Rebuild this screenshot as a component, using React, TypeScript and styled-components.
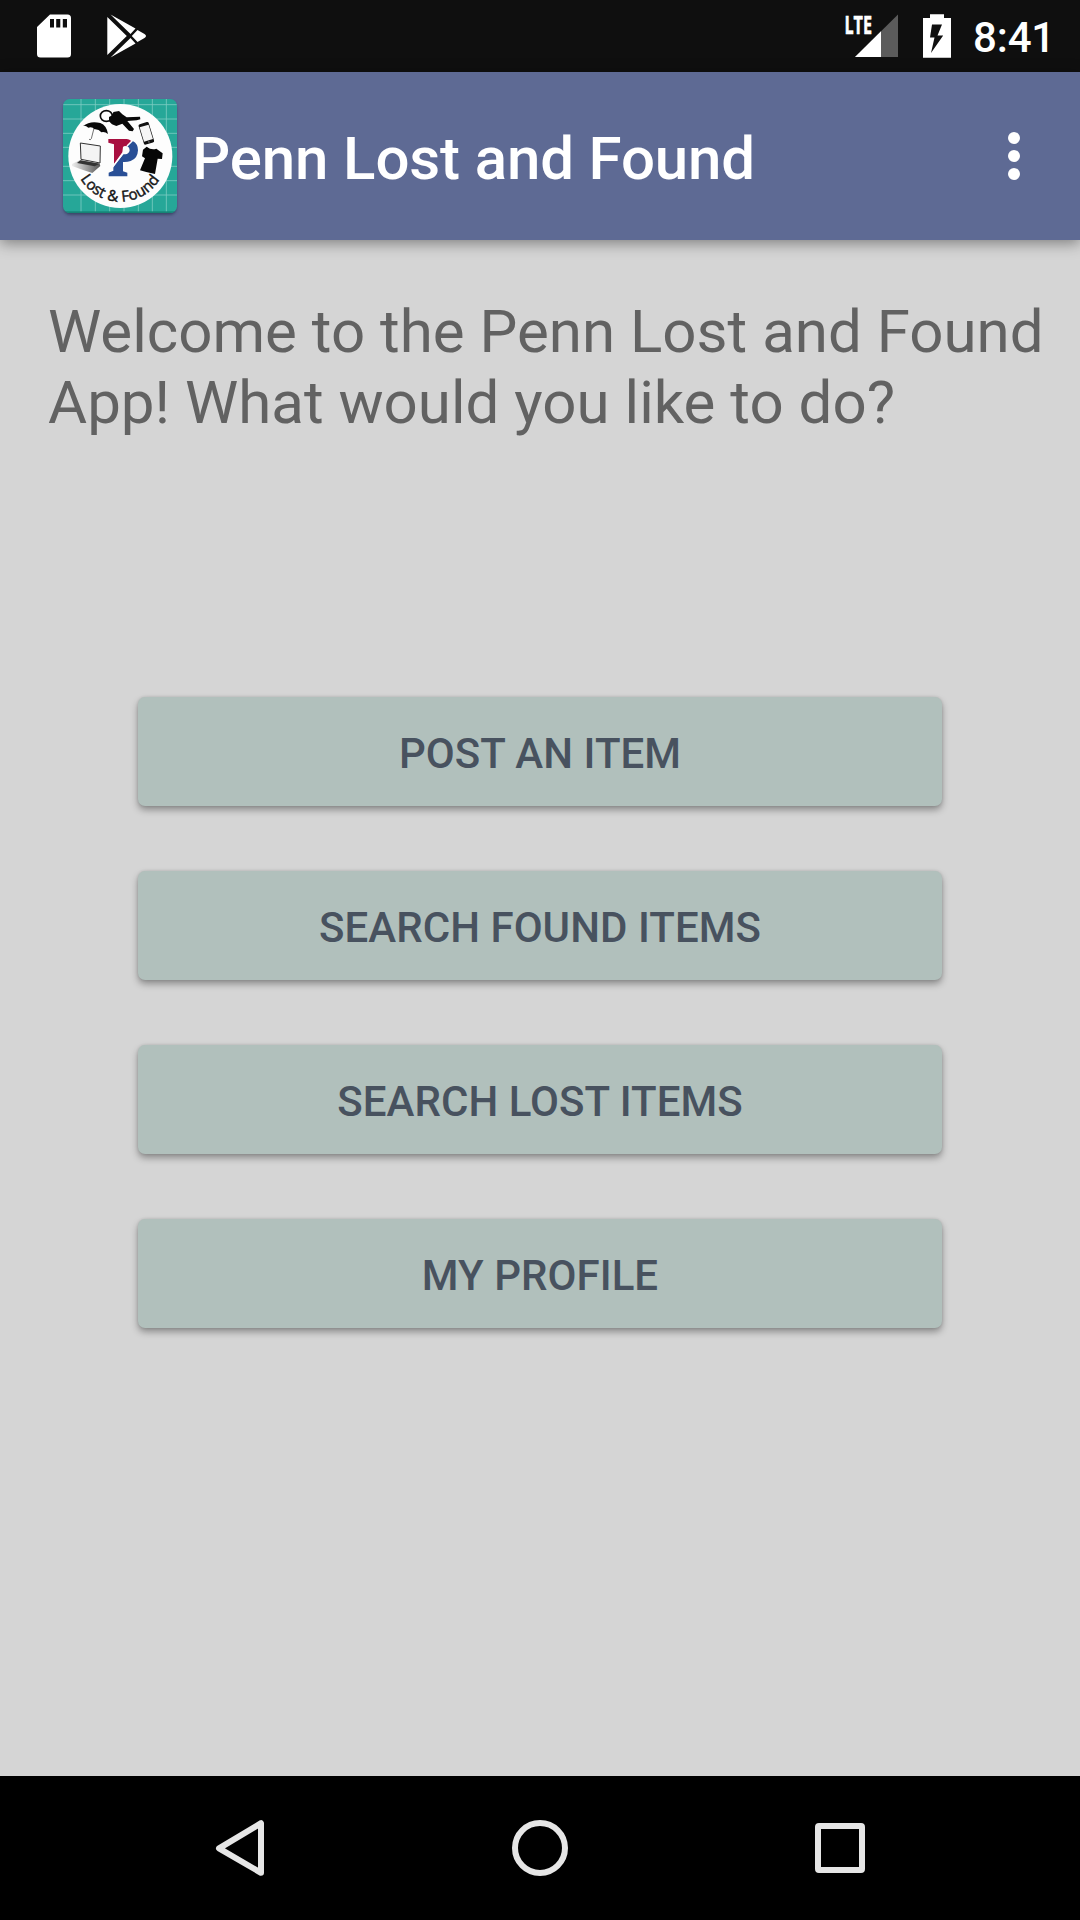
import React from 'react';
import styled, { createGlobalStyle } from 'styled-components';

const GlobalStyle = createGlobalStyle`
  html, body { margin: 0; padding: 0; background: #d5d5d5; }
  * { box-sizing: border-box; }
`;

const Screen = styled.div`
  width: 1080px;
  height: 1920px;
  display: flex;
  flex-direction: column;
  background: #d5d5d5;
  font-family: Roboto, 'Liberation Sans', sans-serif;
  overflow: hidden;
`;

const StatusBar = styled.header`
  flex: none;
  height: 72px;
  padding: 0 25px 0 36px;
  display: flex;
  justify-content: space-between;
  align-items: center;
  background: #0f0f0f;
  color: #fff;
`;

const StatusGroup = styled.div`
  height: 72px;
  display: flex;
  align-items: center;
`;

const StatusIcon = styled.svg<{ $gap: number }>`
  display: block;
  flex: none;
  overflow: visible;
  margin-right: ${(p) => p.$gap}px;
`;

const Clock = styled.time`
  font-size: 42px;
  line-height: 50px;
  font-weight: 500;
  letter-spacing: -0.2px;
  padding-top: 4px;
`;

const AppBar = styled.div`
  flex: none;
  height: 168px;
  padding: 0 60px 0 63px;
  display: flex;
  align-items: center;
  background: #5e6a94;
  box-shadow: 0 3px 14px rgba(0, 0, 0, 0.42);
  z-index: 1;
`;

const Title = styled.h1`
  flex: 1;
  margin: 0;
  padding: 5px 0 0 15px;
  font-size: 60px;
  line-height: 70px;
  font-weight: 500;
  letter-spacing: -0.13px;
  color: #fff;
  white-space: nowrap;
`;

const MenuButton = styled.button`
  border: 0;
  padding: 0;
  background: none;
  display: flex;
  flex-direction: column;
  gap: 6px;
`;

const Dot = styled.span`
  width: 12px;
  height: 12px;
  border-radius: 50%;
  background: #fff;
`;

const Content = styled.main`
  flex: 1;
  padding: 56px 30px 0 48px;
`;

const Welcome = styled.p`
  margin: 0;
  height: 142px;
  font-size: 60px;
  line-height: 71px;
  letter-spacing: 0.02px;
  color: #626262;
  white-space: nowrap;
`;

const Actions = styled.div`
  margin: 259px 108px 0 90px;
  display: flex;
  flex-direction: column;
  gap: 65px;
`;

const Action = styled.button`
  height: 109px;
  border: 0;
  border-radius: 7px;
  padding: 3px 0 0;
  background: #b1c0bc;
  color: #48525f;
  font: 500 42px/49px Roboto, 'Liberation Sans', sans-serif;
  letter-spacing: 0.04px;
  text-transform: uppercase;
  box-shadow: 0 4px 7px rgba(0, 0, 0, 0.34), 0 0 3px rgba(0, 0, 0, 0.12);
`;

const NavBar = styled.nav`
  flex: none;
  height: 144px;
  display: flex;
  justify-content: center;
  align-items: center;
  gap: 200px;
  background: #000;
`;

const NavButton = styled.button`
  width: 100px;
  height: 100px;
  border: 0;
  padding: 0;
  background: none;
  display: flex;
`;

const Logo = () => (
  <svg width="114" height="116" viewBox="39 24 342 348" overflow="visible">
    <defs>
      <clipPath id="tile"><rect x="39" y="27" width="342" height="342" rx="20" /></clipPath>
      <path id="caption" d="M 73 197 A 138 138 0 0 0 349 197" />
      <linearGradient id="floor" x1="1" y1="0" x2="0" y2="0">
        <stop offset="0" stopColor="#555" />
        <stop offset="1" stopColor="#eee" />
      </linearGradient>
      <filter id="soft" x="-10%" y="-10%" width="120%" height="125%"><feGaussianBlur stdDeviation="4" /></filter>
    </defs>
    <rect x="40" y="34" width="340" height="341" rx="20" fill="#26314f" opacity=".65" filter="url(#soft)" />
    <g clipPath="url(#tile)">
      <rect x="39" y="27" width="342" height="342" fill="#26a798" />
      <g stroke="#7ccbc2" strokeWidth="2.5">
        {[94, 137, 180, 223, 266, 308, 350].map((x) => <path key={x} d={`M${x - 1} 27V369`} />)}
        {[45, 88, 131, 173, 230, 273, 316].map((y) => <path key={y} d={`M39 ${y - 1}H381`} />)}
      </g>
      <rect x="39" y="364" width="342" height="5" fill="#168476" />
    </g>
    <circle cx="211" cy="198" r="156" fill="#fdfdfd" />
    <g fill="none" stroke="#0b0b0b">
      <ellipse cx="169" cy="78" rx="18" ry="16" strokeWidth="5" />
      <path d="M134 107L124 146Q120 153 117 147" strokeWidth="2.5" stroke="#555" />
    </g>
    <path d="M99 108Q121 91 151 99Q170 106 174 132Q164 124 154 127Q146 117 134 118Q126 109 115 113Q107 106 99 108Z" fill="#090909" />
    <path d="M177 81L188 75L190 66L207 63L217 73L230 82L270 80L271 88L260 91L232 93L252 117L248 124L237 122L217 101L199 108L186 103L177 94Z" fill="#090909" />
    <path d="M91 159L151 168L150 219L93 208Z" fill="#f4f4f4" stroke="#333" strokeWidth="3" />
    <path d="M66 222L91 210L149 221L151 228L127 249Q98 240 66 228Z" fill="url(#floor)" />
    <path d="M91 211L149 221L134 229L81 219Z" fill="#333" />
    <g transform="rotate(-17 289 130)">
      <rect x="273" y="98" width="32" height="64" rx="5" fill="#111" />
      <rect x="275" y="107" width="28" height="45" fill="#f5f5f5" />
      <circle cx="289" cy="157" r="2" fill="#aaa" />
    </g>
    <path d="M290 170Q304 181 319 176L338 190L336 207L323 206L315 252Q292 248 270 241L285 205L276 199L279 179Z" fill="#070707" />
    <path d="M175 147H230Q237 147 244 153L229 169Q224 166 219 171L217 187L192 222V163L175 158Z" fill="#a80f40" />
    <path d="M248 153Q264 161 264 181Q263 206 242 213Q231 217 219 216V244L232 248V259H176V248L190 242V230L220 193H226Q237 192 239 181Q239 172 232 169Z" fill="#294f96" />
    <path d="M188 231L221 188M231 168L247 152" stroke="#fff" strokeWidth="4" />
    <text fill="#151515" stroke="#151515" strokeWidth="1.4" fontFamily="'Open Sans', 'Noto Sans', sans-serif" fontSize="45" fontWeight="500" textLength="286" lengthAdjust="spacing">
      <textPath href="#caption" startOffset="72">Lost &amp; Found</textPath>
    </text>
  </svg>
);

const actions = ['Post an item', 'Search found items', 'Search lost items', 'My profile'];

export default function App() {
  return (
    <Screen>
      <GlobalStyle />
      <StatusBar>
        <StatusGroup>
          <StatusIcon $gap={35} width="36" height="44" viewBox="36 14 36 44">
            <path fillRule="evenodd" fill="#fff" d="M50 14.5H67.500Q71 14.500 71 18V54Q71 57.500 67.500 57.500H40.500Q37 57.500 37 54V27ZM50 19V27.500H54V19ZM56.200 19V27.500H60.300V19ZM62.800 19V27.500H67V19Z" />
          </StatusIcon>
          <StatusIcon $gap={0} width="40" height="44" viewBox="107 14 40 44">
            <path fill="#fff" d="M107.300 17L126.800 36L107.300 55ZM110.500 14.500L135.500 28.500L130.500 34ZM110.500 57.500L130.500 38L135.500 43.500ZM137.500 30L144.500 34Q147.500 36 144.500 38L137.500 42L131.800 36Z" />
          </StatusIcon>
        </StatusGroup>
        <StatusGroup>
          <StatusIcon $gap={24} width="54" height="44" viewBox="845 14 54 44">
            <path fill="#5b5b5b" d="M898 14.500V57H855Z" />
            <path fill="#fff" d="M881 31.300V57H855Z" />
            <text x="844.500" y="33.500" fill="#fff" stroke="#fff" strokeWidth="0.6" fontFamily="'Open Sans', sans-serif" fontSize="25.500" fontWeight="700" textLength="27.500" lengthAdjust="spacingAndGlyphs">LTE</text>
          </StatusIcon>
          <StatusIcon $gap={21} width="29" height="44" viewBox="923 14 29 44">
            <path fillRule="evenodd" fill="#fff" d="M930 14.300H944V18H951V57.700H923V18H930ZM932 24.500L930 37.500H934.500L931 53L943.200 35.500H937.500L942 24.500Z" />
          </StatusIcon>
          <Clock>8:41</Clock>
        </StatusGroup>
      </StatusBar>
      <AppBar>
        <Logo />
        <Title>Penn Lost and Found</Title>
        <MenuButton aria-label="More options"><Dot /><Dot /><Dot /></MenuButton>
      </AppBar>
      <Content>
        <Welcome>Welcome to the Penn Lost and Found<br />App! What would you like to do?</Welcome>
        <Actions>
          {actions.map((label) => <Action key={label}>{label}</Action>)}
        </Actions>
      </Content>
      <NavBar>
        <NavButton aria-label="Back">
          <svg width="100" height="100" viewBox="190 1798 100 100"><path d="M261 1823.200V1872.800L219 1848.300Z" fill="none" stroke="#e6e6e6" strokeWidth="6" strokeLinejoin="round" /></svg>
        </NavButton>
        <NavButton aria-label="Home">
          <svg width="100" height="100" viewBox="0 0 100 100"><circle cx="50" cy="50" r="25" fill="none" stroke="#e6e6e6" strokeWidth="6" /></svg>
        </NavButton>
        <NavButton aria-label="Recents">
          <svg width="100" height="100" viewBox="0 0 100 100"><path fillRule="evenodd" fill="#e6e6e6" d="M29 25H71Q75 25 75 29V71Q75 75 71 75H29Q25 75 25 71V29Q25 25 29 25ZM31 31V69H69V31Z" /></svg>
        </NavButton>
      </NavBar>
    </Screen>
  );
}
